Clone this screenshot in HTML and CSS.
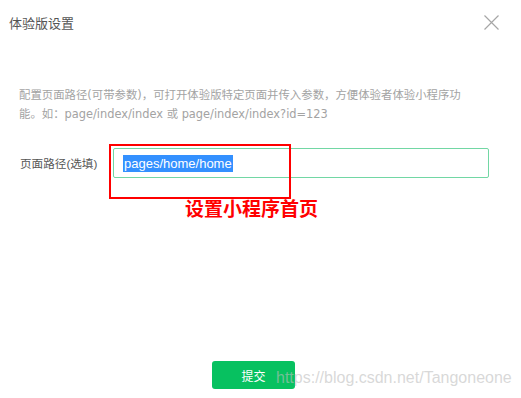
FILE: index.html
```html
<!DOCTYPE html>
<html lang="zh-CN">
<head>
    <meta charset="UTF-8">
    <meta name="viewport" content="width=device-width, initial-scale=1.0">
    <title>体验版设置</title>
    <link rel="stylesheet" href="styles.css">
</head>
<body>
    <div class="dialog">
        <div class="header">
            <span class="title">体验版设置</span>
            <svg class="close" width="15" height="15" viewBox="0 0 15 15">
                <path d="M0.5 0.5 L14.5 14.5 M14.5 0.5 L0.5 14.5" stroke="#a6a6a6" stroke-width="1.2" fill="none"/>
            </svg>
        </div>

        <p class="desc">配置页面路径(可带参数)，可打开体验版特定页面并传入参数，方便体验者体验小程序功能。如：page/index/index 或 page/index/index?id=123</p>

        <div class="form-row">
            <label class="label">页面路径(选填)</label>
            <div class="input"><span class="selected">pages/home/home</span></div>
        </div>

        <div class="footer">
            <button class="submit">提交</button>
        </div>

        <!-- annotations on top of the screenshot -->
        <div class="mark-box"></div>
        <div class="mark-text">设置小程序首页</div>
        <div class="watermark">https://blog.csdn.net/Tangoneone</div>
    </div>
</body>
</html>
```

FILE: styles.css
```css
body {
    margin: 0;
    padding: 0;
    background: #fff;
    font-family: "Liberation Sans", "Noto Sans CJK SC", sans-serif;
}
.dialog {
    position: relative;
    width: 521px;
    height: 398px;
    display: flex;
    flex-direction: column;
    overflow: hidden;
}
.header {
    height: 44px;
    display: flex;
    align-items: center;
    justify-content: space-between;
    padding: 0 22px 0 9px;
}
.title {
    font-size: 13px;
    color: #555;
}
.close {
    display: block;
}
.desc {
    margin: 42px 0 0;
    padding-left: 19px;
    width: 448px;
    font-family: "DejaVu Sans", "Noto Sans CJK SC", sans-serif;
    font-size: 11.4px;
    line-height: 19px;
    color: #a3a3a3;
}
.form-row {
    display: flex;
    align-items: center;
    margin-top: 24px;
    padding-left: 20px;
}
.label {
    width: 93px;
    font-size: 11.6px;
    color: #555;
}
.input {
    box-sizing: border-box;
    width: 376px;
    height: 30px;
    border: 1px solid #72d7a4;
    border-radius: 2px;
    display: flex;
    align-items: center;
    padding-left: 9px;
}
.selected {
    background: #3390ff;
    color: #fff;
    font-size: 13px;
    line-height: 17px;
    padding: 0 1px;
}
.footer {
    margin-top: auto;
    padding: 0 0 9px 212px;
}
.submit {
    width: 83px;
    height: 28px;
    border: none;
    border-radius: 3px;
    background: #07c160;
    color: #fff;
    font-family: inherit;
    font-size: 12px;
    padding: 0;
}
.mark-box {
    position: absolute;
    left: 109px;
    top: 144px;
    width: 182px;
    height: 55px;
    box-sizing: border-box;
    border: 2px solid #f00;
}
.mark-text {
    position: absolute;
    left: 185px;
    top: 200px;
    font-size: 19px;
    line-height: 20px;
    font-weight: bold;
    color: #f00;
}
.watermark {
    position: absolute;
    left: 276px;
    top: 369px;
    font-size: 16px;
    line-height: 18px;
    color: rgba(190, 190, 190, 0.6);
    white-space: nowrap;
}
```
